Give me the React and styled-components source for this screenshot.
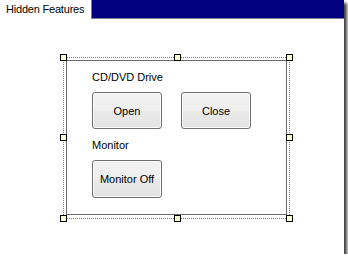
import React from 'react';
import styled, { createGlobalStyle } from 'styled-components';

const GlobalStyle = createGlobalStyle`
  html, body {
    margin: 0;
    padding: 0;
    background: #fff;
  }
  body {
    font-family: "Liberation Sans", Arial, sans-serif;
    font-size: 11px;
    color: #000;
  }
`;

// WINDOW FRAME (screenshot with drop shadow)
const Window = styled.div`
  width: 344px;
  height: 254px;
  background: #fff;
  box-shadow: 3px 3px 3px 0 rgba(0, 0, 0, 0.75);
  display: flex;
  flex-direction: column;
`;

// TAB STRIP
const TabStrip = styled.div`
  display: flex;
  height: 19px;
`;

const Tab = styled.div`
  width: 85px;
  padding-left: 6px;
  line-height: 19px;
  white-space: nowrap;
  letter-spacing: -0.2px;
`;

const TabFill = styled.div`
  flex: 1;
  background: #000080;
  border-left: 1px solid #7c7c90;
  border-bottom: 1px solid #7c7c90;
`;

// DESIGNER CANVAS
const Canvas = styled.div`
  flex: 1;
  padding: 38px 0 0 63px;
`;

const Selection = styled.div`
  position: relative;
  width: 227px;
  box-sizing: border-box;
  border: 1px dotted #7a7a7a;
  padding: 2px 2px 3px 2px;
`;

const Handle = styled.span`
  position: absolute;
  width: 7px;
  height: 7px;
  box-sizing: border-box;
  border: 1px solid #000;
  background: #ffffd4;
  ${(p) => (p.$x === 'start' ? 'left: -4px;' : p.$x === 'mid' ? 'left: calc(50% - 3px);' : 'right: -4px;')}
  ${(p) => (p.$y === 'start' ? 'top: -4px;' : p.$y === 'mid' ? 'top: calc(50% - 4px);' : 'bottom: -4px;')}
`;

const Panel = styled.div`
  height: 155px;
  box-sizing: border-box;
  border: 1px solid #6a6a6a;
  padding: 10px 0 0 25px;
`;

const Label = styled.div`
  line-height: 13px;
  margin: ${(p) => (p.$first ? '0' : '10px')} 0 8px 0;
`;

const Row = styled.div`
  display: flex;
  gap: 19px;
`;

const Button = styled.button`
  width: 70px;
  height: ${(p) => (p.$tall ? '38px' : '37px')};
  margin: 0;
  padding: 0;
  border: 1px solid #707070;
  border-radius: 3px;
  background: linear-gradient(#f2f2f2 0%, #efefef 50%, #e9e9e9 51%, #e4e4e4 100%);
  box-shadow: inset 0 0 0 1px #fbfbfb;
  font-family: inherit;
  font-size: 11px;
  color: #000;
`;

const handles = [
  ['start', 'start'], ['mid', 'start'], ['end', 'start'],
  ['start', 'mid'], ['end', 'mid'],
  ['start', 'end'], ['mid', 'end'], ['end', 'end'],
];

export default function App() {
  return (
    <>
      <GlobalStyle />
      <Window>
        <TabStrip>
          <Tab>Hidden Features</Tab>
          <TabFill />
        </TabStrip>
        <Canvas>
          <Selection>
            {handles.map(([x, y]) => (
              <Handle key={x + y} $x={x} $y={y} />
            ))}
            <Panel>
              <Label $first>CD/DVD Drive</Label>
              <Row>
                <Button>Open</Button>
                <Button>Close</Button>
              </Row>
              <Label>Monitor</Label>
              <Row>
                <Button $tall>Monitor Off</Button>
              </Row>
            </Panel>
          </Selection>
        </Canvas>
      </Window>
    </>
  );
}
